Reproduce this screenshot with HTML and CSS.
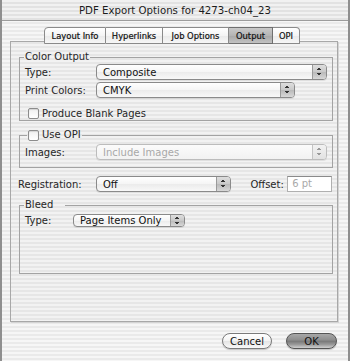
FILE: index.html
```html
<!DOCTYPE html>
<html lang="en">
<head>
    <meta charset="UTF-8">
    <title>PDF Export Options</title>
    <link rel="stylesheet" href="styles.css">
</head>
<body>
    <div class="window">
        <div class="titlebar">PDF Export Options for 4273-ch04_23</div>

        <div class="tabs">
            <span class="tab first">Layout Info</span>
            <span class="tab">Hyperlinks</span>
            <span class="tab">Job Options</span>
            <span class="tab selected">Output</span>
            <span class="tab last">OPI</span>
        </div>

        <div class="panel">
            <fieldset class="group color-output">
                <legend>Color Output</legend>
                <div class="row">
                    <label class="label">Type:</label>
                    <div class="popup w-wide"><span>Composite</span><span class="arrows"></span></div>
                </div>
                <div class="row">
                    <label class="label">Print Colors:</label>
                    <div class="popup w-cmyk"><span>CMYK</span><span class="arrows"></span></div>
                </div>
                <div class="row check-row">
                    <span class="checkbox"></span>
                    <span>Produce Blank Pages</span>
                </div>
            </fieldset>

            <fieldset class="group opi">
                <legend class="check-legend"><span class="checkbox"></span><span>Use OPI</span></legend>
                <div class="row">
                    <label class="label">Images:</label>
                    <div class="popup w-wide disabled"><span>Include Images</span><span class="arrows"></span></div>
                </div>
            </fieldset>

            <div class="row registration">
                <label class="label">Registration:</label>
                <div class="popup w-off"><span>Off</span><span class="arrows"></span></div>
                <label class="offset-label">Offset:</label>
                <div class="textfield">6 pt</div>
            </div>

            <fieldset class="group bleed">
                <legend class="bleed-legend">Bleed</legend>
                <div class="row">
                    <label class="label short">Type:</label>
                    <div class="popup small w-bleed"><span>Page Items Only</span><span class="arrows"></span></div>
                </div>
            </fieldset>
        </div>

        <div class="buttons">
            <button class="btn">Cancel</button>
            <button class="btn btn-default">OK</button>
        </div>
    </div>
</body>
</html>
```

FILE: styles.css
```css
* {
    margin: 0;
    padding: 0;
    box-sizing: border-box;
    font-family: 'DejaVu Sans', Verdana, sans-serif;
}

body {
    width: 350px;
    height: 361px;
    overflow: hidden;
    background: #fff;
}

.window {
    width: 350px;
    height: 361px;
    border-left: 2px solid #8f8f8f;
    border-right: 2px solid #8f8f8f;
    background: repeating-linear-gradient(to bottom, #f6f6f6 0, #f6f6f6 2px, #eaeaea 2px, #eaeaea 4px);
    color: #262626;
    font-size: 10px;
}

.titlebar {
    height: 21px;
    line-height: 21px;
    text-align: center;
    font-size: 10.2px;
    color: #1c1c1c;
    border-bottom: 1px solid #9c9c9c;
    background: repeating-linear-gradient(to bottom, #f1f1f1 0, #f1f1f1 2px, #e2e2e2 2px, #e2e2e2 4px);
}

/* Onglets */
.tabs {
    position: relative;
    z-index: 1;
    display: flex;
    margin-top: 6px;
    padding-left: 42px;
    height: 17px;
}

.tab {
    height: 17px;
    line-height: 16px;
    font-size: 8.4px;
    text-align: center;
    color: #111;
    border: 1px solid #8a8a8a;
    border-left: none;
    background: linear-gradient(#ffffff, #f4f4f4 50%, #e9e9e9 51%, #f7f7f7);
    -webkit-text-stroke: 0.2px #111;
}

.tab:nth-child(1) { width: 62px; }
.tab:nth-child(2) { width: 57px; }
.tab:nth-child(3) { width: 66px; }
.tab:nth-child(4) { width: 44px; }
.tab:nth-child(5) { width: 27px; }

.tab.first {
    border-left: 1px solid #8a8a8a;
    border-top-left-radius: 4px;
}

.tab.last {
    border-top-right-radius: 4px;
}

.tab.selected {
    background: linear-gradient(#c9c9c9, #b4b4b4 50%, #a6a6a6 51%, #c2c2c2);
    border-color: #6f6f6f;
}

/* Panneau */
.panel {
    margin: -3px 0 0 8px;
    width: 328px;
    height: 281px;
    padding: 9px 5px 0 8px;
    border: 1px solid #a8a8a8;
    box-shadow: 1px 1px 0 #d4d4d4;
    background-color: rgba(0, 0, 0, 0.015);
}

.group {
    width: 314px;
    border: 1px solid #a3a3a3;
    padding: 1px 5px 0 5px;
    min-inline-size: 0;
}

.group legend {
    font-size: 10px;
    line-height: 12px;
    padding: 0 1px;
    margin-left: -1px;
}

.color-output {
    padding-bottom: 1px;
}

.opi {
    margin-top: 7px;
    padding-top: 2px;
    padding-bottom: 7px;
}

.check-legend {
    display: flex;
    align-items: center;
    gap: 3px;
    line-height: 14px !important;
    margin-left: 2px !important;
}

.bleed {
    margin-top: 7px;
    height: 75px;
}

.bleed-legend {
    padding-right: 12px !important;
}

.row {
    display: flex;
    align-items: center;
    height: 16px;
}

.row + .row {
    margin-top: 2px;
}

.label {
    width: 71px;
    flex-shrink: 0;
}

.label.short {
    width: 48px;
}

.check-row {
    margin-top: 9px !important;
    height: 12px;
    padding-left: 3px;
    gap: 3px;
}

.checkbox {
    display: inline-block;
    width: 11px;
    height: 11px;
    border: 1px solid #8c8c8c;
    border-radius: 2px;
    background: linear-gradient(#f0f0f0, #ffffff);
    box-shadow: inset 0 1px 1px rgba(0, 0, 0, 0.12);
}

/* Menus déroulants */
.popup {
    display: flex;
    align-items: center;
    height: 16px;
    padding-left: 6px;
    border: 1px solid #8a8a8a;
    border-radius: 4px;
    background: linear-gradient(#ffffff, #f5f5f5 50%, #ebebeb 51%, #f8f8f8);
    box-shadow: 0 1px 0 rgba(0, 0, 0, 0.08);
    color: #111;
    overflow: hidden;
}

.popup .arrows {
    margin-left: auto;
    width: 14px;
    height: 100%;
    border-left: 1px solid #9a9a9a;
    background:
        linear-gradient(to bottom right, transparent 49%, #333 50%) no-repeat,
        linear-gradient(to bottom left, transparent 49%, #333 50%) no-repeat,
        linear-gradient(to top right, transparent 49%, #333 50%) no-repeat,
        linear-gradient(to top left, transparent 49%, #333 50%) no-repeat,
        linear-gradient(#dedede, #c9c9c9 50%, #b9b9b9 51%, #d8d8d8);
    background-size: 2px 2px, 2px 2px, 2px 2px, 2px 2px, 100% 100%;
    background-position: 4px 3px, 6px 3px, 4px 8px, 6px 8px, 0 0;
}

.popup.small {
    height: 13px;
}

.popup.small .arrows {
    background-position: 4px 2px, 6px 2px, 4px 7px, 6px 7px, 0 0;
}

.popup.disabled {
    color: #a8a8a8;
    border-color: #bcbcbc;
    background: linear-gradient(#fbfbfb, #f2f2f2);
}

.popup.disabled .arrows {
    border-left-color: #c4c4c4;
    background:
        linear-gradient(to bottom right, transparent 49%, #999 50%) no-repeat,
        linear-gradient(to bottom left, transparent 49%, #999 50%) no-repeat,
        linear-gradient(to top right, transparent 49%, #999 50%) no-repeat,
        linear-gradient(to top left, transparent 49%, #999 50%) no-repeat,
        linear-gradient(#f2f2f2, #e2e2e2);
    background-size: 2px 2px, 2px 2px, 2px 2px, 2px 2px, 100% 100%;
    background-position: 4px 3px, 6px 3px, 4px 8px, 6px 8px, 0 0;
}

.w-wide { width: 231px; }
.w-cmyk { width: 199px; }
.w-off { width: 136px; }
.w-bleed { width: 112px; }

.registration {
    margin-top: 8px;
    margin-left: -1px;
}

.registration .label {
    width: 78px;
}

.offset-label {
    margin-left: 19px;
    width: 37px;
}

.textfield {
    width: 45px;
    height: 16px;
    line-height: 14px;
    padding-left: 4px;
    color: #a8a8a8;
    background: #fff;
    border: 1px solid #b0b0b0;
    border-top-color: #8a8a8a;
}

/* Boutons */
.buttons {
    display: flex;
    justify-content: flex-end;
    gap: 14px;
    margin-top: 11px;
    padding-right: 11px;
}

.btn {
    width: 50px;
    height: 16px;
    font-size: 10px;
    color: #111;
    border: 1px solid #7a7a7a;
    border-radius: 8px;
    background: linear-gradient(#ffffff, #f3f3f3 50%, #e4e4e4 51%, #f9f9f9);
    box-shadow: 0 1px 1px rgba(0, 0, 0, 0.2);
}

.btn-default {
    width: 51px;
    border-color: #555;
    background: linear-gradient(#a8a8a8, #8c8c8c 45%, #777 50%, #9a9a9a 75%, #cfcfcf);
}
```
